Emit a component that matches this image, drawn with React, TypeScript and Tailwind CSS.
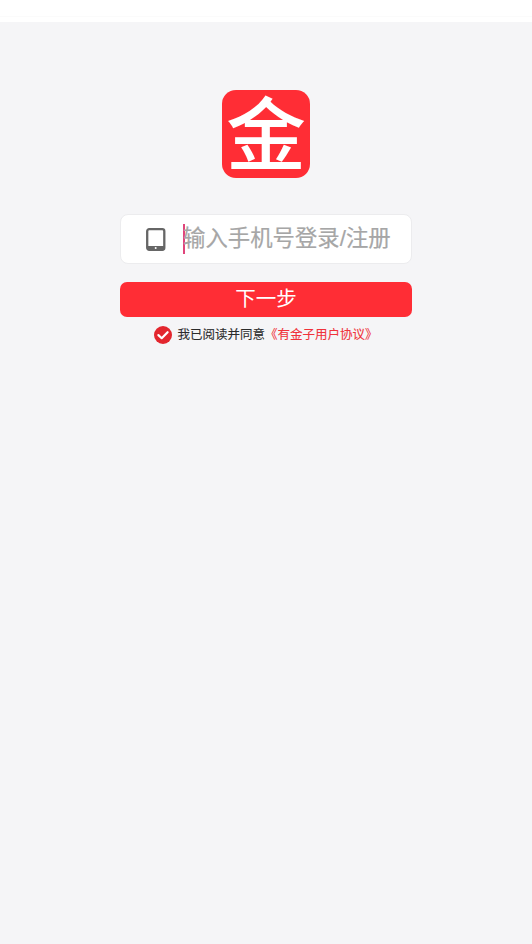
function TabletIcon() {
  return (
    <svg width="20" height="23" viewBox="0 0 20 23" fill="none">
      <rect x="1.2" y="1.2" width="17.1" height="20.6" rx="2" stroke="#666666" strokeWidth="2.3" />
      <rect x="1.2" y="18" width="17.1" height="3.8" fill="#666666" />
      <circle cx="9.7" cy="20" r="1" fill="#ffffff" />
    </svg>
  );
}

function CheckIcon() {
  return (
    <svg width="18" height="18" viewBox="0 0 18 18">
      <circle cx="9" cy="9" r="9" fill="#e3262e" />
      <path d="M4.4 9.1l3.3 3.1 5.9-6" fill="none" stroke="#ffffff" strokeWidth="2.2" strokeLinecap="round" strokeLinejoin="round" />
    </svg>
  );
}

export default function App() {
  return (
    <div className="min-h-[944px] bg-[#f5f5f7] font-['Liberation_Sans','Noto_Sans_CJK_SC',sans-serif]">
      <div className="h-[22px] bg-white">
        <div className="h-[17px] border-b border-[#fbfbfb]" />
      </div>

      <div className="flex flex-col items-center pt-[68px]">
        {/* logo */}
        <div className="w-[88px] h-[88px] rounded-[14px] bg-[#ff2d35] flex items-center justify-center pt-[5px]">
          <span className="text-white text-[80px] leading-none font-medium">金</span>
        </div>

        {/* phone input */}
        <div className="mt-[36px] w-[292px] h-[50px] bg-white rounded-[8px] border border-[#ececee] flex items-center pl-[25px]">
          <TabletIcon />
          <div className="ml-[17px] w-[1.5px] h-[30px] bg-[#e0457b]" />
          <span className="-ml-[1.5px] text-[22.4px] leading-none text-[#a6a6a6] [-webkit-text-stroke:0.2px_#a6a6a6]">输入手机号登录/注册</span>
        </div>

        <button className="mt-[18px] w-[292px] h-[35px] bg-[#ff2d35] rounded-[7px] text-white text-[20.5px] leading-none flex items-center justify-center">
          下一步
        </button>

        {/* agreement */}
        <div className="mt-[9px] flex items-center text-[12.5px] leading-none">
          <CheckIcon />
          <span className="ml-[5px] text-[#2b2b2b] [-webkit-text-stroke:0.1px_#2b2b2b]">我已阅读并同意</span>
          <span className="text-[#f0323a] [-webkit-text-stroke:0.1px_#f0323a]">《有金子用户协议》</span>
        </div>
      </div>
    </div>
  );
}
